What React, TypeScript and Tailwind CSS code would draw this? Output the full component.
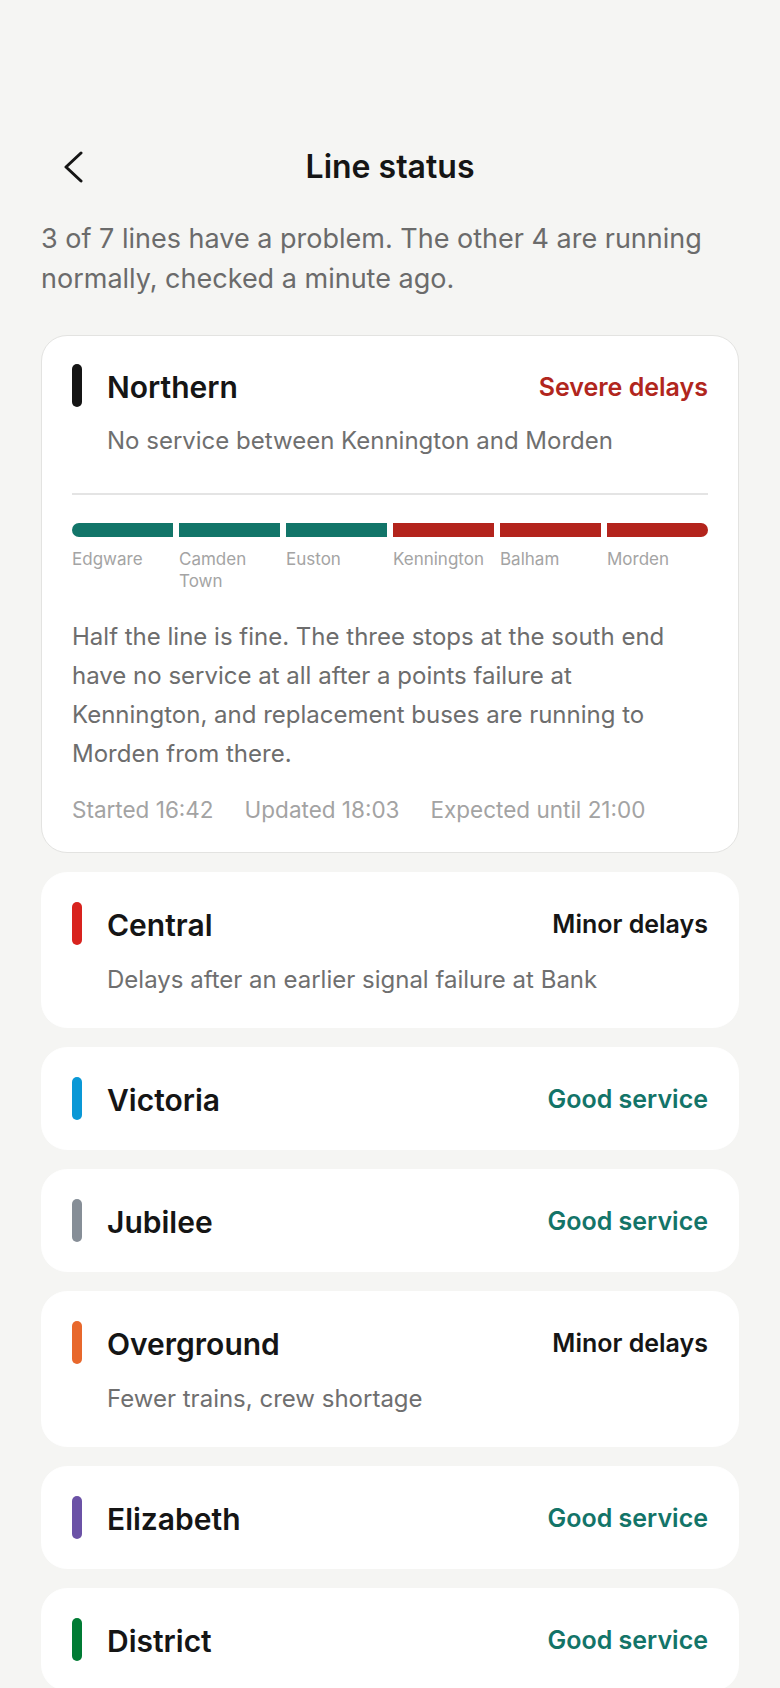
import React from 'react';

type Line = {
  name: string;
  color: string;
  status: string;
  statusClass: string;
  note?: string;
};

const lines: Line[] = [
  { name: 'Central', color: 'bg-[#d8231e]', status: 'Minor delays', statusClass: 'text-[#151515]', note: 'Delays after an earlier signal failure at Bank' },
  { name: 'Victoria', color: 'bg-[#0a98d6]', status: 'Good service', statusClass: 'text-[#137468]' },
  { name: 'Jubilee', color: 'bg-[#868e97]', status: 'Good service', statusClass: 'text-[#137468]' },
  { name: 'Overground', color: 'bg-[#e8682c]', status: 'Minor delays', statusClass: 'text-[#151515]', note: 'Fewer trains, crew shortage' },
  { name: 'Elizabeth', color: 'bg-[#6b52a6]', status: 'Good service', statusClass: 'text-[#137468]' },
  { name: 'District', color: 'bg-[#007b34]', status: 'Good service', statusClass: 'text-[#137468]' },
];

const stops = [
  { name: 'Edgware', ok: true },
  { name: 'Camden Town', ok: true },
  { name: 'Euston', ok: true },
  { name: 'Kennington', ok: false },
  { name: 'Balham', ok: false },
  { name: 'Morden', ok: false },
];

const LineHeader = ({ name, color, status, statusClass }: { name: string; color: string; status: string; statusClass: string }) => (
  <div className="flex items-center h-[43px]">
    <span className={`w-[10px] h-[43px] rounded-full ${color}`} />
    <span className="ml-[25px] mt-[3px] text-[30px] font-semibold text-[#151515] leading-none">{name}</span>
    <span className={`ml-auto mt-[3px] text-[25px] font-semibold leading-none ${statusClass}`}>{status}</span>
  </div>
);

const LineCard = ({ line }: { line: Line }) => (
  <div className="bg-white rounded-[26px] border border-white px-[30px] pt-[29px] pb-[29px]">
    <LineHeader {...line} />
    {line.note && (
      <p className="mt-[17px] pl-[35px] text-[24px] leading-[36px] text-[#6f6f6f]">{line.note}</p>
    )}
  </div>
);

export default function App() {
  return (
    <div className="min-h-screen bg-[#f5f5f3] px-[41px] pt-[139px] pb-10" style={{ fontFamily: 'Inter, "Noto Sans", sans-serif' }}>
      <header className="relative flex items-center justify-center h-[56px]">
        <button className="absolute left-[22px] top-1/2 -translate-y-1/2 text-[#151515]" aria-label="Back">
          <svg width="20" height="32" viewBox="0 0 20 32" fill="none">
            <polyline points="18,2 3,16 18,30" stroke="currentColor" strokeWidth="3" strokeLinecap="round" strokeLinejoin="round" />
          </svg>
        </button>
        <h1 className="text-[32px] font-semibold text-[#151515]">Line status</h1>
      </header>

      <p className="mt-[24px] text-[27px] leading-[40px] text-[#6b6b6b]">
        3 of 7 lines have a problem. The other 4 are running normally, checked a minute ago.
      </p>

      <div className="mt-[36px] flex flex-col gap-[19px]">
        <div className="bg-white rounded-[26px] border border-[#e3e3e1] px-[30px] pt-[28px] pb-[28px]">
          <LineHeader name="Northern" color="bg-[#151515]" status="Severe delays" statusClass="text-[#b1261d]" />
          <p className="mt-[16px] pl-[35px] text-[24px] leading-[36px] text-[#6f6f6f]">
            No service between Kennington and Morden
          </p>
          <div className="mt-[34px] h-[1.5px] bg-[#e4e4e4]" />

          <div className="mt-[28px] grid grid-cols-6 gap-x-[6px]">
            {stops.map((s, i) => (
              <div
                key={s.name}
                className={`h-[14px] ${s.ok ? 'bg-[#127569]' : 'bg-[#b3241c]'} ${i === 0 ? 'rounded-l-full' : ''} ${i === stops.length - 1 ? 'rounded-r-full' : ''}`}
              />
            ))}
          </div>
          <div className="mt-[11px] grid grid-cols-6 gap-x-[6px]">
            {stops.map((s) => (
              <span key={s.name} className="text-[17px] leading-[22px] text-[#a4a4a4]">
                {s.name}
              </span>
            ))}
          </div>

          <p className="mt-[25px] text-[24px] leading-[39px] text-[#6d6d6d]">
            Half the line is fine. The three stops at the south end have no service at all after a points failure at Kennington, and replacement buses are running to Morden from there.
          </p>

          <div className="mt-[23px] flex gap-[31px] text-[22.5px] leading-[28px] text-[#a3a3a3]">
            <span>Started 16:42</span>
            <span>Updated 18:03</span>
            <span>Expected until 21:00</span>
          </div>
        </div>

        {lines.map((l) => (
          <LineCard key={l.name} line={l} />
        ))}
      </div>
    </div>
  );
}
